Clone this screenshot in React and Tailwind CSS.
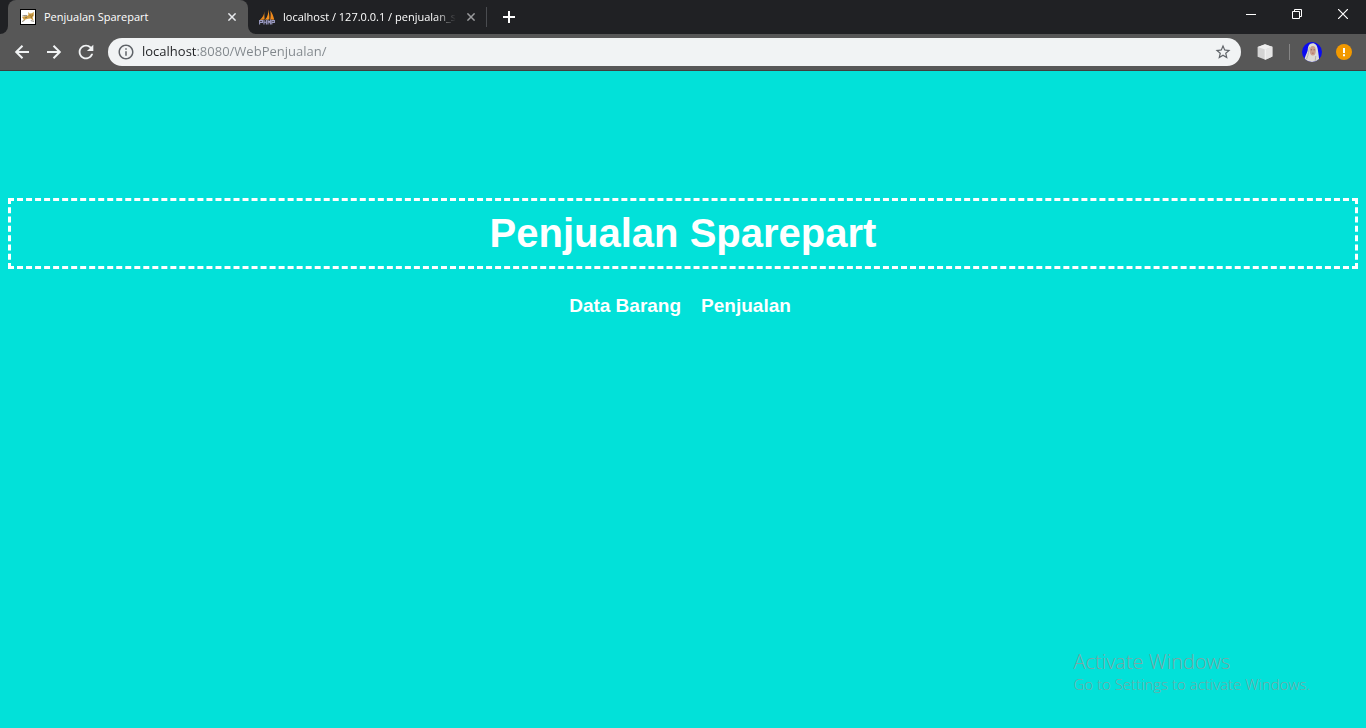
import React from "react";
import { MdRefresh, MdInfoOutline, MdStarBorder } from "react-icons/md";

function CloseIcon({ className }) {
  return (
    <svg viewBox="0 0 8 8" className={className} fill="none" stroke="currentColor" strokeWidth="1.5">
      <path d="M0.4 0.4L7.6 7.6M7.6 0.4L0.4 7.6" />
    </svg>
  );
}

function TomcatIcon() {
  return (
    <svg viewBox="0 0 16 16" className="size-4 shrink-0">
      <rect width="16" height="16" fill="#000" />
      <rect x="1" y="1" width="14" height="14" fill="#fff" />
      <path d="M2 8.6L4.2 7.2L7 7L8.4 6L8.2 3L9.6 4.4L12 4.2L13.8 2.8L13.8 6.5L12.6 8.6L13.6 11.4L12.2 10.8L10.6 9.4L8 9.8L5.5 10.6L2.6 12L3.8 10.2Z" fill="#cf9f47" />
      <path d="M2 12.6L4.6 11.4M2.2 7L5 6.4L7 6.6M5 8.8L7 8.4M10.8 11.6L14 12.4" stroke="#6b6250" strokeWidth="0.7" fill="none" />
      <path d="M9.6 6.2H10.6M11.8 6.2H12.8M10.6 8H12" stroke="#5a4012" strokeWidth="0.7" />
    </svg>
  );
}

function SailIcon() {
  return (
    <svg viewBox="0 0 16 16" className="size-4 shrink-0">
      <path d="M5.2 2.2C5.4 5.5 3.6 8.5 0.8 11L5.6 10.6Z" fill="#e8871a" />
      <path d="M9 0.4C9.6 4 8.8 7.6 6 10.8L10.4 10.4C10.6 6.5 10 3.4 9 0.4Z" fill="#f7931e" />
      <path d="M11.2 1.6C13.2 4.4 14.6 7.2 15.2 10.8L11.2 10.4C11.8 7.2 11.8 4.6 11.2 1.6Z" fill="#f08a1c" />
      <path d="M0.6 15.5V11.5H3.5V13.4H0.6M5 15.5V11M5 13.2H7.4M7.4 11V15.5M9 15.5V11.5L10.2 13.2L11.4 11.5V15.5M12.8 15.5V11.5H15.4V13.4H12.8" fill="none" stroke="#9c9cc4" strokeWidth="1.1" />
    </svg>
  );
}

function ArrowIcon({ d }) {
  return (
    <svg viewBox="0 0 22 22" className="size-[22px]" fill="none" stroke="currentColor" strokeWidth="2">
      <path d={d} />
    </svg>
  );
}

function CubeIcon() {
  return (
    <svg viewBox="0 0 16 16" className="size-4">
      <path d="M8 0.2L15.4 2.8V12.6L8.4 15.8L0.6 12.8V3Z" fill="#d4d4d4" />
      <path d="M8 0.2L15.4 2.8L8.2 5.4L0.6 3Z" fill="#efefef" />
      <path d="M8.2 5.4L15.4 2.8V12.6L8.4 15.8Z" fill="#e6e6e6" />
      <path d="M8.2 5.4V15.6" stroke="#fff" strokeWidth="0.8" />
    </svg>
  );
}

function Avatar() {
  return (
    <svg viewBox="0 0 20 20" className="size-5">
      <defs>
        <clipPath id="avatar-clip">
          <circle cx="10" cy="10" r="10" />
        </clipPath>
      </defs>
      <g clipPath="url(#avatar-clip)">
        <rect width="20" height="20" fill="#0a0af0" />
        <path d="M10.6 1.2C7.4 1.2 6 4 5.8 7.5C5.4 11 3 13 2 20H17C17.4 16 16.4 12 15.8 7.5C15.4 3.6 13.6 1.2 10.6 1.2Z" fill="#dcdcd6" />
        <path d="M7.4 5C6.6 9 6.8 12 4.6 17M13.8 14C13.2 16 13.6 18 13 20" stroke="#aaaaa2" strokeWidth="0.8" fill="none" />
        <ellipse cx="10.8" cy="8.8" rx="3" ry="4.7" fill="#c9a08e" />
        <path d="M8.8 7.8H10M11.6 7.8H12.8" stroke="#6a4a44" strokeWidth="0.7" />
        <path d="M9.9 11.2H11.7" stroke="#a85a58" strokeWidth="0.7" />
      </g>
    </svg>
  );
}

function TabStrip() {
  return (
    <div className="flex h-[34px] items-stretch bg-[#202124] text-[11px] text-white">
      <span className="size-2 self-end bg-[#575757]">
        <span className="block size-2 rounded-br-lg bg-[#202124]" />
      </span>
      <div className="flex w-60 items-center gap-2 rounded-t-lg bg-[#575757] pr-3 pl-3">
        <TomcatIcon />
        <span className="grow whitespace-nowrap">Penjualan Sparepart</span>
        <button type="button" aria-label="Close tab" className="text-[#e8eaed]">
          <CloseIcon className="size-2" />
        </button>
      </div>
      <span className="size-2 self-end bg-[#575757]">
        <span className="block size-2 rounded-bl-lg bg-[#202124]" />
      </span>
      <div className="flex w-[230px] items-center gap-2 pr-[11px] pl-[3px]">
        <SailIcon />
        <span className="whitespace-nowrap mask-r-from-88% mask-r-to-100%">
          localhost / 127.0.0.1 / penjualan_s
        </span>
        <button type="button" aria-label="Close tab" className="ml-auto text-[#9a9b9d]">
          <CloseIcon className="size-2" />
        </button>
      </div>
      <span className="h-5 w-px self-center bg-[#4a4c50]" />
      <button type="button" aria-label="New tab" className="flex w-11 items-center justify-center">
        <svg viewBox="0 0 12 12" className="size-3" stroke="#fff" strokeWidth="2">
          <path d="M6 0V12M0 6H12" />
        </svg>
      </button>
      <div className="ml-auto flex h-7 text-white">
        <button type="button" aria-label="Minimize" className="flex w-[46px] items-center justify-center">
          <svg viewBox="0 0 10 10" className="size-2.5" stroke="currentColor">
            <path d="M0 5.5H10" />
          </svg>
        </button>
        <button type="button" aria-label="Restore" className="flex w-[46px] items-center justify-center">
          <svg viewBox="0 0 10 10" className="size-2.5" fill="none" stroke="currentColor">
            <path d="M0.5 2.5H7.5V9.5H0.5ZM2.5 2.5V0.5H9.5V7.5H7.5" />
          </svg>
        </button>
        <button type="button" aria-label="Close" className="flex w-[46px] items-center justify-center">
          <svg viewBox="0 0 10 10" className="size-2.5" stroke="currentColor" strokeWidth="1.2">
            <path d="M0 0L10 10M10 0L0 10" />
          </svg>
        </button>
      </div>
    </div>
  );
}

function Toolbar() {
  return (
    <div className="flex h-[37px] items-center border-b border-[#3f3f3f] bg-[#575757] pr-3 pl-[11px]">
      <div className="flex gap-2.5 pr-[11px] text-[#f1f3f4]">
        <button type="button" aria-label="Back">
          <ArrowIcon d="M18 11H5.5M11.5 4.7L5.2 11L11.5 17.3" />
        </button>
        <button type="button" aria-label="Forward">
          <ArrowIcon d="M4 11H16.5M10.5 4.7L16.8 11L10.5 17.3" />
        </button>
        <button type="button" aria-label="Reload">
          <MdRefresh className="size-[22px]" />
        </button>
      </div>
      <div className="flex h-7 grow items-center gap-[7px] rounded-full bg-[#f1f3f4] px-[9px] text-[#5f6368]">
        <MdInfoOutline className="size-[18px] shrink-0" />
        <input
          type="text"
          aria-label="Address"
          defaultValue="localhost:8080/WebPenjualan/"
          className="min-w-0 grow bg-[linear-gradient(to_right,#202124_55px,#80868b_55px)] bg-clip-text text-[13px] text-transparent outline-none"
        />
        <button type="button" aria-label="Bookmark this page">
          <MdStarBorder className="size-[18px]" />
        </button>
      </div>
      <div className="flex items-center pl-4">
        <button type="button" aria-label="Extension">
          <CubeIcon />
        </button>
        <span className="mx-3 ml-4 h-4 w-px bg-[#858585]" />
        <button type="button" aria-label="Profile">
          <Avatar />
        </button>
        <button type="button" aria-label="Update available" className="ml-3.5 pr-0.5">
          <svg viewBox="0 0 16 16" className="size-4">
            <circle cx="8" cy="8" r="8" fill="#f29900" />
            <path d="M8 4V9M8 10.2V12.2" stroke="#fff" strokeWidth="2" />
          </svg>
        </button>
      </div>
    </div>
  );
}

export default function App() {
  return (
    <div className="flex min-h-screen flex-col bg-[#02e1d9]">
      <header className="font-['Open_Sans','Noto_Sans',sans-serif]">
        <TabStrip />
        <Toolbar />
      </header>
      <main className="grow px-2 pt-[127px] text-center font-['Liberation_Sans',Arial,sans-serif] font-bold text-white">
        <h1 className="border-[3px] border-dashed border-white p-2.5 text-[40px] leading-[45px]">
          Penjualan Sparepart
        </h1>
        <nav className="flex justify-center gap-5 pt-[25px] pr-1.5 text-[19px] leading-6">
          <a href="#data-barang">Data Barang</a>
          <a href="#penjualan">Penjualan</a>
        </nav>
      </main>
      <aside className="self-end pr-14 pb-[34px] font-['Open_Sans','Noto_Sans',sans-serif] font-light text-[#7ba6a4]">
        <p className="text-xl leading-6">Activate Windows</p>
        <p className="text-[15px] leading-5">Go to Settings to activate Windows.</p>
      </aside>
    </div>
  );
}
